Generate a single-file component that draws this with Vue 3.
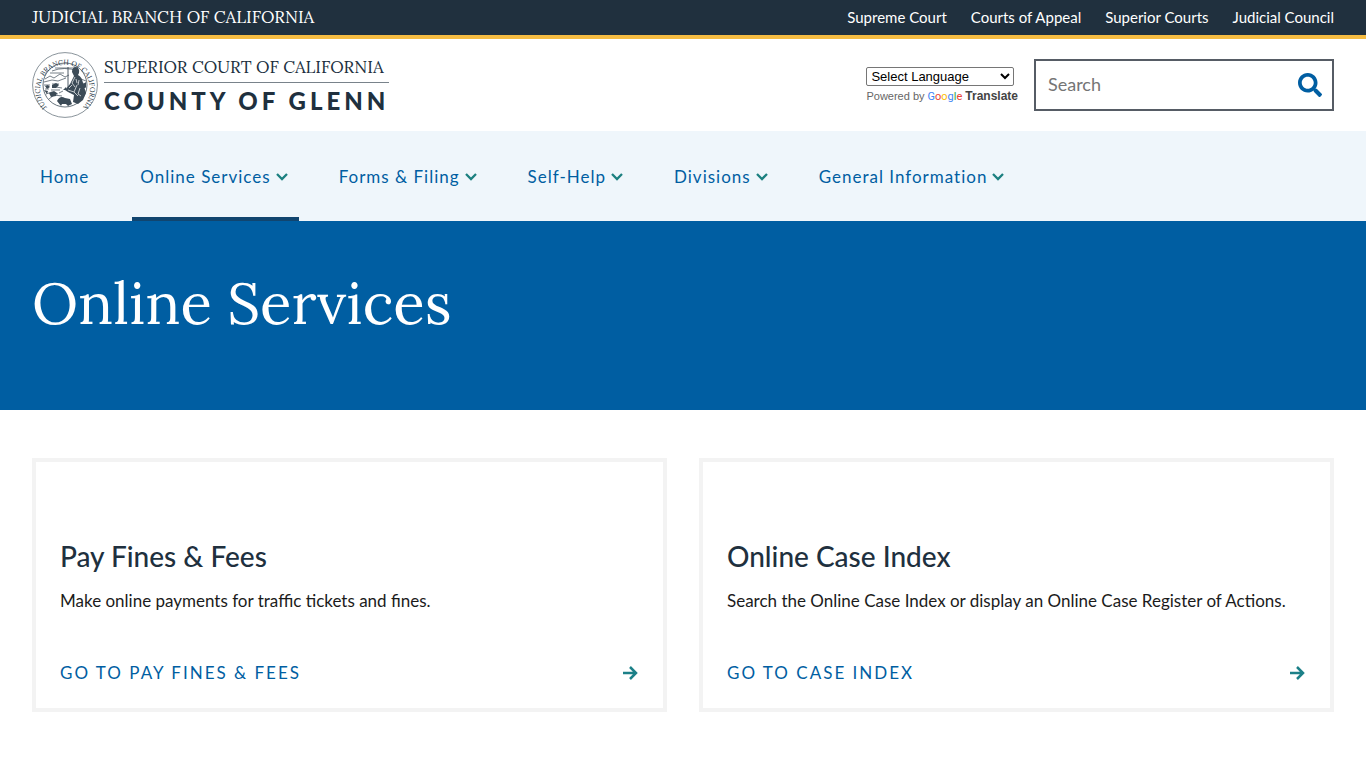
<script setup>
import { ref } from "vue";

const branchLinks = [
  "Supreme Court",
  "Courts of Appeal",
  "Superior Courts",
  "Judicial Council"
];

const menuList = [
  { label: "Home", dropdown: false, active: false },
  { label: "Online Services", dropdown: true, active: true },
  { label: "Forms & Filing", dropdown: true, active: false },
  { label: "Self-Help", dropdown: true, active: false },
  { label: "Divisions", dropdown: true, active: false },
  { label: "General Information", dropdown: true, active: false }
];

const cards = [
  {
    title: "Pay Fines & Fees",
    text: "Make online payments for traffic tickets and fines.",
    link: "Go to Pay Fines & Fees"
  },
  {
    title: "Online Case Index",
    text: "Search the Online Case Index or display an Online Case Register of Actions.",
    link: "Go to Case Index"
  }
];

const search = ref("");
const language = ref("");
</script>

<template>
  <div class="page">
    <div class="topbar">
      <a class="branch" href="#">JUDICIAL BRANCH OF CALIFORNIA</a>
      <nav class="branch-links" aria-label="Judicial branch">
        <a v-for="link in branchLinks" :key="link" href="#">{{ link }}</a>
      </nav>
    </div>

    <header class="header">
      <a class="logo" href="#">
        <svg class="seal" viewBox="0 0 66 66" aria-hidden="true">
          <defs>
            <path id="seal-ring" d="M14.5 54.5 A25 25 0 1 1 51.5 54.5" />
          </defs>
          <circle cx="33" cy="33" r="32.4" fill="none" stroke="#6b7780" stroke-width="0.8" />
          <circle cx="33" cy="33" r="22" fill="none" stroke="#3c4b57" stroke-width="0.8" />
          <text class="seal-text"><textPath href="#seal-ring" startOffset="50%" text-anchor="middle">JUDICIAL BRANCH OF CALIFORNIA</textPath></text>
          <!-- hills and bay -->
          <g fill="none" stroke="#3c4b57" stroke-width="0.7">
            <path d="M13 27 l5 -3 4 2 6 -4 5 3 4 -2 M12 30 l8 -2 6 1 8 -3 M20 19 q12 -5 26 0 M23 16 l20 0 M18 21 h14" />
            <path d="M12 33 h6 M20 32 h7 M13 37 h4 M19 38 h9 M14 42 l6 -2 6 2 M17 47 l5 -4 8 1 M24 35 l6 1 M27 41 l4 -2" />
            <path d="M49 27 l5 2 M50 31 l4 1 M51 36 l3 -1 M50 41 l3 0 M49 45 l2 1" />
            <path d="M36 15 v22" stroke-width="0.9" />
          </g>
          <!-- ships, Minerva and the bear -->
          <g fill="#3c4b57">
            <path d="M13 34 l3 -1 2 2 -3 2 z M20 33 l4 -2 3 2 -3 3 -4 0 z M17 41 l5 -2 3 2 -1 3 -5 1 z M12 38 l4 1 -1 3 z" />
            <path d="M40 20 q0 -5 4 -5 q4 1 3 6 l-1 2 q4 2 5 8 l3 10 -3 7 -5 4 -5 -2 1 -7 -6 -3 -3 -2 5 -6 3 -6 1 -2 z" />
            <path d="M25 49 q3 -6 8 -3 l5 1 2 5 -4 2 -2 -2 -4 0 -1 2 z" />
            <path d="M50 33 l4 -3 0 5 -3 2 z M31 38 l3 -3 1 3 z" />
          </g>
          <path d="M43 25 l-3 6 3 4 M45 33 l-3 7 4 4 M36 38 l6 2 M47 28 l-1 5 M48 36 l-2 6 3 2 M44 27 l1 4 M40 33 l-3 3" fill="none" stroke="#fff" stroke-width="0.7" />
        </svg>
        <span class="logo-text">
          <span class="logo-court">SUPERIOR COURT OF CALIFORNIA</span>
          <span class="logo-county">COUNTY OF GLENN</span>
        </span>
      </a>

      <div class="tools">
        <div class="translate">
          <select v-model="language" aria-label="Language Translate Widget">
            <option value="">Select Language</option>
            <option value="es">Spanish</option>
          </select>
          <div class="powered">
            <span>Powered by</span>
            <a href="#">
              <span class="google"><i class="b">G</i><i class="r">o</i><i class="y">o</i><i class="b">g</i><i class="g">l</i><i class="r">e</i></span>
              <b>Translate</b>
            </a>
          </div>
        </div>
        <form class="search" @submit.prevent>
          <input v-model="search" type="text" placeholder="Search" aria-label="Search" />
          <button type="submit" aria-label="Submit search">
            <svg viewBox="0 0 512 512" width="24" height="24" fill="#005ea2">
              <path d="M505 442.700 405.300 343c-4.500-4.500-10.600-7-17-7H372c27.600-35.300 44-79.700 44-128C416 93.100 322.900 0 208 0S0 93.100 0 208s93.100 208 208 208c48.300 0 92.700-16.400 128-44v16.300c0 6.400 2.500 12.500 7 17l99.700 99.700c9.400 9.400 24.600 9.400 33.900 0l28.300-28.300c9.400-9.400 9.400-24.600.1-34zM208 336c-70.700 0-128-57.200-128-128 0-70.700 57.200-128 128-128 70.700 0 128 57.200 128 128 0 70.700-57.200 128-128 128z" />
            </svg>
          </button>
        </form>
      </div>
    </header>

    <nav class="menu" aria-label="Main">
      <a
        v-for="item in menuList"
        :key="item.label"
        href="#"
        class="menu-item"
        :class="{ active: item.active }"
      >
        {{ item.label }}
        <svg v-if="item.dropdown" viewBox="0 0 12 8" width="12" height="8">
          <path d="M1 1 6 6 11 1" fill="none" stroke="#1c8080" stroke-width="2.300" />
        </svg>
      </a>
    </nav>

    <section class="hero">
      <h1>Online Services</h1>
    </section>

    <main class="cards">
      <article v-for="card in cards" :key="card.title" class="card">
        <h2>{{ card.title }}</h2>
        <p>{{ card.text }}</p>
        <a href="#" class="card-link">
          <span>{{ card.link }}</span>
          <svg viewBox="0 0 16 16" width="16" height="16">
            <path d="M0 8 H13 M7 2 13 8 7 14" fill="none" stroke="#1c8088" stroke-width="2.500" />
          </svg>
        </a>
      </article>
    </main>
  </div>
</template>

<style>
body {
  margin: 0;
  background: #fff;
}
</style>

<style scoped>
.page {
  font-family: Lato, "Liberation Sans", sans-serif;
  color: #1b1b1b;
}

a {
  color: inherit;
  text-decoration: none;
}

.topbar {
  display: flex;
  justify-content: space-between;
  align-items: center;
  padding: 0 32px;
  background: #20303e;
  border-bottom: 4px solid #f5bc42;
  color: #fff;
  line-height: 35px;
}

.branch {
  font-family: Lora, "Liberation Serif", serif;
  font-size: 17px;
}

.branch-links {
  display: flex;
  gap: 24px;
  font-size: 15px;
}

.header {
  display: flex;
  justify-content: space-between;
  align-items: center;
  padding: 13px 32px;
}

.logo {
  display: flex;
  align-items: center;
  gap: 6px;
  color: #20303e;
}

.seal {
  width: 66px;
  height: 66px;
}

.seal-text {
  font-family: Lora, "Liberation Serif", serif;
  font-size: 7px;
  fill: #20303e;
}

.logo-text {
  display: flex;
  flex-direction: column;
}

.logo-court {
  padding-bottom: 5px;
  border-bottom: 1px solid #79838b;
  font-family: Lora, "Liberation Serif", serif;
  font-size: 17px;
  line-height: 20px;
}

.logo-county {
  padding-top: 6px;
  font-size: 24px;
  font-weight: 900;
  line-height: 24px;
  letter-spacing: 4px;
}

.tools {
  display: flex;
  align-items: center;
  gap: 16px;
}

.translate {
  font-family: "Liberation Sans", Arial, sans-serif;
}

.translate select {
  display: block;
  width: 148px;
  height: 19px;
  padding: 0;
  border: 1px solid #767676;
  border-radius: 2px;
  background: #fff;
  color: #000;
  font-family: inherit;
  font-size: 13px;
}

.powered {
  display: flex;
  gap: 3px;
  margin-top: 3px;
  color: #666;
  font-size: 11px;
  line-height: 15px;
  white-space: nowrap;
}

.powered a {
  display: flex;
  gap: 3px;
}

.powered b {
  color: #444;
  font-size: 12px;
}

.google i {
  font-family: Roboto, sans-serif;
  font-style: normal;
}

.google .b { color: #4285f4; }
.google .r { color: #ea4335; }
.google .y { color: #fbbc05; }
.google .g { color: #34a853; }

.search {
  display: flex;
  box-sizing: border-box;
  width: 300px;
  height: 52px;
  border: 2px solid #565c65;
}

.search input {
  flex: 1;
  min-width: 0;
  padding: 0 12px 2px;
  border: 0;
  background: none;
  font-family: inherit;
  font-size: 18px;
}

.search input::placeholder {
  color: #757575;
}

.search button {
  display: flex;
  align-items: center;
  padding: 0 10px;
  border: 0;
  background: none;
}

.menu {
  display: flex;
  gap: 32px;
  background: #eff6fb;
  padding: 0 32px;
}

.menu-item {
  display: flex;
  align-items: center;
  gap: 5px;
  padding: 6px 11px 0 8px;
  border-bottom: 4px solid transparent;
  color: #005ea2;
  font-size: 17px;
  line-height: 80px;
  letter-spacing: 1px;
}

.menu-item.active {
  border-bottom-color: #11456f;
}

.hero {
  padding: 46px 32px 71px;
  background: #005ea2;
}

.hero h1 {
  margin: 0;
  color: #fff;
  font-family: Lora, "Liberation Serif", serif;
  font-size: 58px;
  font-weight: 400;
  line-height: 72px;
}

.cards {
  display: grid;
  grid-template-columns: 1fr 1fr;
  gap: 32px;
  padding: 48px 32px;
}

.card {
  padding: 76px 24px 20px;
  border: 4px solid #f3f3f3;
}

.card h2 {
  margin: 0;
  color: #20303e;
  font-size: 28px;
  font-weight: 500;
  line-height: 36px;
}

.card p {
  margin: 13px 0 43px;
  font-size: 17px;
  line-height: 28px;
}

.card-link {
  display: flex;
  justify-content: space-between;
  align-items: center;
  color: #005ea2;
  font-size: 17px;
  line-height: 30px;
  letter-spacing: 2px;
  text-transform: uppercase;
}
</style>
